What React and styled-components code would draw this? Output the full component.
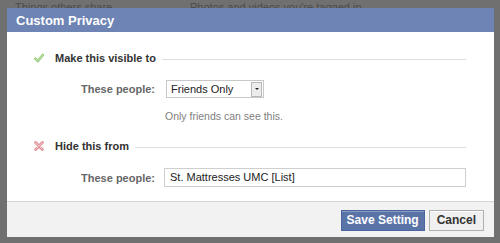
import React from 'react';
import styled, { createGlobalStyle } from 'styled-components';

const GlobalStyle = createGlobalStyle`
  html, body {
    margin: 0;
    padding: 0;
    background: #707070;
    font-family: "Liberation Sans", Arial, sans-serif;
  }
`;

const Page = styled.div`
  position: relative;
  width: 500px;
  height: 243px;
  overflow: hidden;
  background: #707070;
`;

const BackdropRow = styled.div`
  display: flex;
  padding: 1px 0 0 15px;
  font-size: 11px;
  line-height: 13px;
  color: #4c4c4c;
`;

const BackdropText = styled.span`
  width: ${p => p.w}px;
`;

const Dialog = styled.div`
  position: absolute;
  top: 8px;
  left: 7px;
  width: 487px;
  height: 229px;
  display: flex;
  flex-direction: column;
  background: #fff;
`;

const Header = styled.div`
  height: 24px;
  padding-left: 9px;
  background: #6d84b4;
  color: #fff;
  font-size: 13px;
  font-weight: bold;
  line-height: 25px;
`;

const Body = styled.div`
  flex: 1;
  padding: 18px 28px 0 27px;
`;

const SectionHead = styled.div`
  display: flex;
  align-items: center;
  height: 16px;
  margin-top: ${p => p.top || 0}px;
`;

const IconBox = styled.span`
  display: flex;
  width: 10px;
  height: 10px;
  margin-right: 11px;
`;

const HeadText = styled.span`
  font-size: 11px;
  font-weight: bold;
  color: #333;
`;

const Rule = styled.span`
  flex: 1;
  height: 1px;
  margin: 2px 0 0 6px;
  background: #dedede;
`;

const Field = styled.div`
  display: flex;
  align-items: center;
  margin-top: 14px;
`;

const Label = styled.span`
  width: 121px;
  text-align: right;
  font-size: 11px;
  font-weight: bold;
  color: #666;
  margin-right: ${p => p.gap}px;
`;

const Select = styled.div`
  display: flex;
  align-items: center;
  justify-content: space-between;
  box-sizing: border-box;
  width: 98px;
  height: 18px;
  padding: 0 1px 0 4px;
  border: 1px solid #c8c8c8;
  font-size: 11px;
  color: #222;
`;

const ArrowBox = styled.span`
  display: flex;
  align-items: center;
  justify-content: center;
  width: 9px;
  height: 13px;
  border: 1px solid #b8b8b8;
  background: #ececec;
`;

const Arrow = styled.span`
  width: 0;
  height: 0;
  border-left: 2px solid transparent;
  border-right: 2px solid transparent;
  border-top: 2px solid #222;
`;

const Hint = styled.div`
  margin: 12px 0 0 131px;
  font-size: 10.5px;
  line-height: 13px;
  color: #808080;
`;

const Input = styled.div`
  flex: 1;
  box-sizing: border-box;
  height: 19px;
  padding-left: 5px;
  border: 1px solid #cfcfcf;
  font-size: 11px;
  line-height: 17px;
  color: #222;
`;

const Footer = styled.div`
  display: flex;
  justify-content: flex-end;
  align-items: flex-start;
  gap: 4px;
  height: 36px;
  padding: 8px 10px 0 0;
  box-sizing: border-box;
  border-top: 1px solid #d4d4d4;
  background: #f2f2f2;
`;

const Button = styled.button`
  height: 21px;
  padding: 0 ${p => (p.primary ? 5 : 7)}px;
  font-family: "Liberation Sans", Arial, sans-serif;
  font-size: 12px;
  font-weight: bold;
  line-height: 19px;
  color: ${p => (p.primary ? '#fff' : '#333')};
  background: ${p => (p.primary ? '#5b74a8' : '#f0f0f0')};
  border: 1px solid ${p => (p.primary ? '#4a64a0' : '#b0b0b0')};
  box-shadow: inset 0 1px 0 ${p => (p.primary ? '#8a9cc2' : '#fff')};
  cursor: pointer;
`;

const Check = () => (
  <svg width="10" height="10" viewBox="0 0 10 10">
    <path d="M1.3 5.6 L3.9 8 L8.8 2" fill="none" stroke="#93c978" strokeWidth="2.6" strokeLinecap="round" strokeLinejoin="round" />
    <path d="M1.3 5.6 L3.9 8 L8.8 2" fill="none" stroke="#c9e8b4" strokeWidth="1" strokeLinecap="round" strokeLinejoin="round" />
  </svg>
);

const Cross = () => (
  <svg width="10" height="10" viewBox="0 0 10 10">
    <path d="M1.6 1.6 L8.4 8.4 M8.4 1.6 L1.6 8.4" fill="none" stroke="#dc8590" strokeWidth="2.8" strokeLinecap="round" />
    <path d="M1.6 1.6 L8.4 8.4 M8.4 1.6 L1.6 8.4" fill="none" stroke="#f4c6cb" strokeWidth="1.1" strokeLinecap="round" />
  </svg>
);

export default function App() {
  return (
    <Page>
      <GlobalStyle />
      <BackdropRow>
        <BackdropText w={175}>Things others share</BackdropText>
        <BackdropText w={200}>Photos and videos you're tagged in</BackdropText>
      </BackdropRow>
      <Dialog>
        <Header>Custom Privacy</Header>
        <Body>
          <SectionHead>
            <IconBox><Check /></IconBox>
            <HeadText>Make this visible to</HeadText>
            <Rule />
          </SectionHead>
          <Field>
            <Label gap={11}>These people:</Label>
            <Select>
              Friends Only
              <ArrowBox><Arrow /></ArrowBox>
            </Select>
          </Field>
          <Hint>Only friends can see this.</Hint>
          <SectionHead top={15}>
            <IconBox><Cross /></IconBox>
            <HeadText>Hide this from</HeadText>
            <Rule />
          </SectionHead>
          <Field>
            <Label gap={9}>These people:</Label>
            <Input>St. Mattresses UMC [List]</Input>
          </Field>
        </Body>
        <Footer>
          <Button primary>Save Setting</Button>
          <Button>Cancel</Button>
        </Footer>
      </Dialog>
    </Page>
  );
}
